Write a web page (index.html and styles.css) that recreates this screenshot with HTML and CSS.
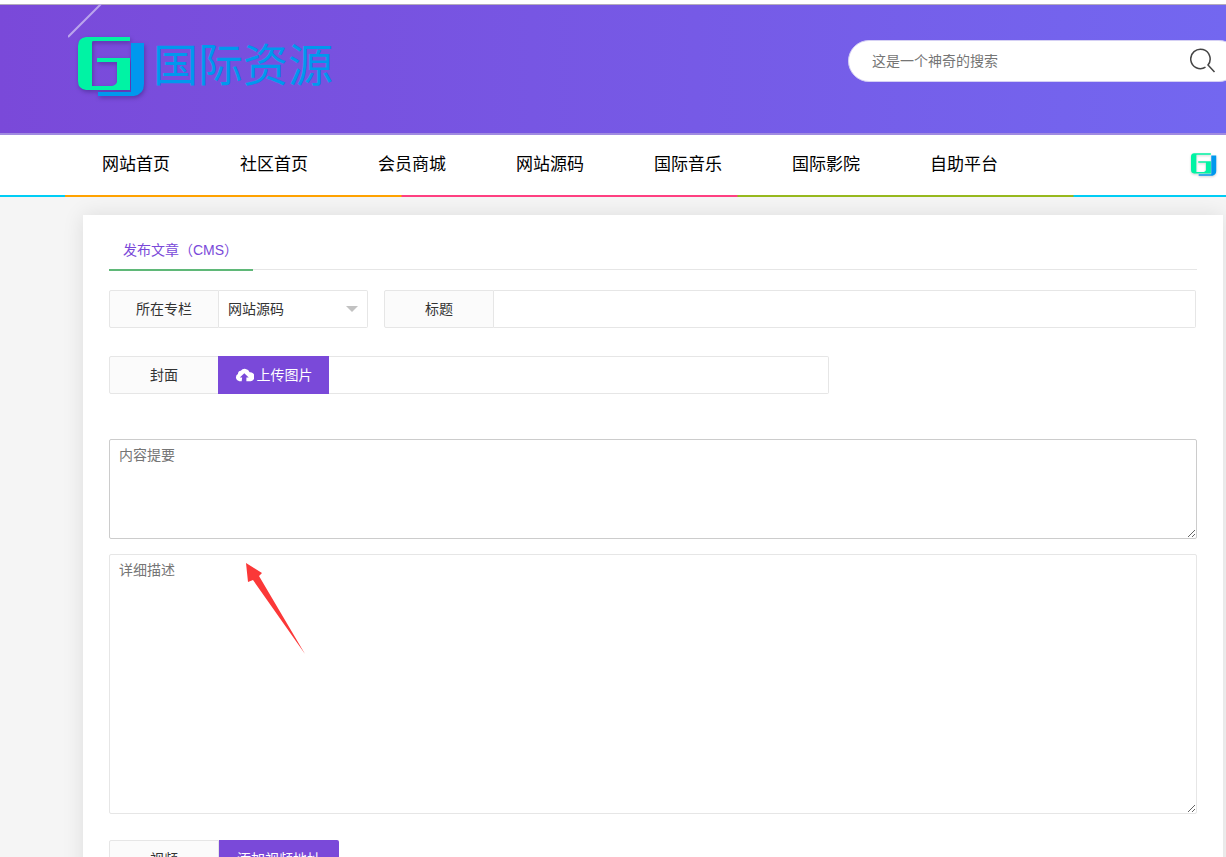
FILE: index.html
```html
<!DOCTYPE html>
<html lang="zh-CN">
<head>
<meta charset="utf-8">
<title>国际资源</title>
<link rel="stylesheet" href="styles.css">
</head>
<body>
<svg class="defs" aria-hidden="true">
  <symbol id="logo-mark" viewBox="0 0 68 62">
    <path fill="#0098ee" d="M53 6h13v41q0 10-10 12H20v-4h33z"/>
    <path fill="#00f3a4" d="M8 0H52V4H15q-1 0-1 2V49H34q4-1 5-4V25H19V21H52V53H8Q0 52 0 44V9Q0 1 8 0Z"/>
  </symbol>
</svg>
<header class="header">
  <svg class="streak" viewBox="0 0 34 34" aria-hidden="true"><path d="M0 33L33 0"/></svg>
  <a class="brand" href="#">
    <svg class="brand-mark" aria-hidden="true"><use href="#logo-mark"/></svg>
    <span class="brand-name">国际资源</span>
  </a>
  <form class="search">
    <input class="search-input" type="text" placeholder="这是一个神奇的搜索" aria-label="搜索">
    <button class="search-button" type="button" aria-label="搜索">
      <svg viewBox="0 0 26 26" width="26" height="26"><path d="M15.500 20.200A9.700 9.700 0 1 1 18 18L24.500 25"/></svg>
    </button>
  </form>
</header>
<nav class="nav">
  <a href="#">网站首页</a>
  <a href="#">社区首页</a>
  <a href="#">会员商城</a>
  <a href="#">网站源码</a>
  <a href="#">国际音乐</a>
  <a href="#">国际影院</a>
  <a href="#">自助平台</a>
  <svg class="avatar" aria-hidden="true"><use href="#logo-mark"/></svg>
</nav>
<main class="card">
  <div class="tabs"><a class="tab" href="#">发布文章（CMS）</a></div>
  <form>
    <div class="row">
      <div class="group group-select">
        <label class="label" for="column">所在专栏</label>
        <div class="select-wrap"><select class="field select" id="column"><option>网站源码</option></select></div>
      </div>
      <div class="group group-title">
        <label class="label" for="title">标题</label>
        <input class="field" id="title" type="text">
      </div>
    </div>
    <div class="row row-cover">
      <div class="group group-cover">
        <label class="label" for="cover">封面</label>
        <button class="button" type="button">
          <svg class="cloud" viewBox="0 0 20 16" aria-hidden="true"><path d="M7 14H4.500A4 4 0 0 1 3 6.500 3.500 3.500 0 0 1 6 3 5.500 5.500 0 0 1 15.500 4.500 4 4 0 0 1 16.500 14H12V10H14.500L9.800 5.500 5 10H7.500Z"/></svg>上传图片
        </button>
        <input class="field" id="cover" type="text">
      </div>
    </div>
    <textarea class="area area-summary" placeholder="内容提要" aria-label="内容提要"></textarea>
    <div class="detail">
      <textarea class="area area-detail" placeholder="详细描述" aria-label="详细描述"></textarea>
      <svg class="arrow" viewBox="0 0 60 92" aria-hidden="true"><path d="M0 0L16 10 13 13 59 91 7 17 2 19Z"/></svg>
    </div>
    <div class="group">
      <span class="label">视频</span>
      <button class="button button-video" type="button">添加视频地址</button>
    </div>
  </form>
</main>
</body>
</html>
```
FILE: styles.css
```css
* { box-sizing: border-box; }
body {
  margin: 0;
  background: #f5f5f5;
  color: #333;
  font: 14px/24px "Liberation Sans", "Noto Sans CJK SC", sans-serif;
  overflow-x: hidden;
}
a { color: inherit; text-decoration: none; }
input, select, textarea, button { font: inherit; color: inherit; }
::placeholder { color: #757575; opacity: 1; }
.defs { position: absolute; width: 0; height: 0; }

.header {
  position: relative;
  display: flex;
  justify-content: space-between;
  align-items: flex-start;
  height: 135px;
  padding: 35px 0 0 78px;
  border-top: 4px solid #fff;
  border-bottom: 2px solid #a08be0;
  background: linear-gradient(90deg, #7a49d9, #7367f0);
  box-shadow: inset 0 1px #b3aabb;
  overflow: hidden;
}
.streak {
  position: absolute;
  left: 68px;
  top: 0;
  width: 34px;
  height: 34px;
  fill: none;
  stroke: #bba5ec;
  stroke-width: 2;
}
.brand { display: flex; gap: 7px; margin-top: -2px; }
.brand-mark { width: 68px; height: 62px; filter: drop-shadow(1px 2px 2px rgba(40, 20, 90, .4)); }
.brand-name { color: #0098ee; font-size: 45px; line-height: 60px; white-space: nowrap; }
.search {
  display: flex;
  flex: 0 0 392px;
  height: 42px;
  margin-right: -14px;
  margin-top: 1px;
  border: 1px solid #d5d0f4;
  border-radius: 21px;
  background: #fff;
}
.search-input { flex: 1; min-width: 0; padding: 0 0 0 23px; border: 0; background: none; outline: 0; }
.search-button {
  display: flex;
  align-items: flex-start;
  width: 26px;
  margin-right: 23px;
  padding: 6px 0 0;
  border: 0;
  background: none;
}
.search-button path { fill: none; stroke: #444; stroke-width: 1.5; }

.nav {
  display: flex;
  align-items: center;
  height: 62px;
  padding: 0 9px 2px 67px;
  background:
    repeating-linear-gradient(90deg, #ffa200 0 336px, #ff4081 337px 672px, #97b91e 673px 1008px, #00cdf5 1009px 1345px) 65px 100% / 1345px 2px repeat-x,
    #fff;
  color: #000;
  font-size: 17px;
}
.nav a { padding: 0 35px; white-space: nowrap; }
.avatar { width: 26px; height: 24px; margin-left: auto; filter: drop-shadow(0 1px 1px rgba(0, 0, 0, .2)); }

.card {
  margin: 18px 3px 0 83px;
  padding: 16px 26px 28px;
  background: #fff;
  box-shadow: 0 0 20px rgba(0, 0, 0, .1);
}
.tabs { display: flex; height: 39px; margin-bottom: 20px; border-bottom: 1px solid #e6e6e6; }
.tab { height: 40px; padding: 0 15px 0 14px; border-bottom: 2px solid #5fb878; color: #7a49d9; line-height: 38px; }
.row { display: flex; gap: 16px; padding-right: 1px; margin-bottom: 28px; }
.row-cover { margin-bottom: 45px; }
.group { display: flex; height: 38px; }
.group-select { flex: 0 0 259px; }
.group-title { flex: 1; }
.group-cover { flex: 0 0 720px; }
.label {
  flex: 0 0 110px;
  border: 1px solid #e6e6e6;
  border-radius: 2px 0 0 2px;
  background: #fbfbfb;
  line-height: 36px;
  text-align: center;
}
.field {
  flex: 1;
  min-width: 0;
  padding: 0 9px;
  border: 1px solid #e6e6e6;
  border-left: 0;
  border-radius: 0 2px 2px 0;
  background: #fff;
  outline: 0;
}
.select-wrap { position: relative; display: flex; flex: 1; }
.select-wrap::after {
  content: "";
  position: absolute;
  right: 10px;
  top: 16px;
  border: 6px solid transparent;
  border-top-color: #c2c2c2;
  pointer-events: none;
}
.select { appearance: none; }
.button {
  display: flex;
  align-items: center;
  justify-content: center;
  gap: 3px;
  width: 111px;
  margin-left: -1px;
  padding: 0;
  border: 0;
  background: #7a49d9;
  color: #fff;
}
.button-video { width: 120px; margin-left: 0; border-radius: 0 2px 2px 0; }
.cloud { width: 19px; height: 15px; fill: #fff; }
.area {
  display: block;
  width: 100%;
  padding: 6px 9px;
  border: 1px solid #e6e6e6;
  border-radius: 2px;
  background: #fff;
  line-height: 18px;
  outline: 0;
  resize: vertical;
}
.area-summary { height: 100px; margin-bottom: 15px; border-color: #ccc; }
.detail { position: relative; margin-bottom: 26px; }
.area-detail { height: 260px; }
.arrow { position: absolute; left: 137px; top: 9px; width: 60px; height: 92px; fill: #fb3838; }
```
